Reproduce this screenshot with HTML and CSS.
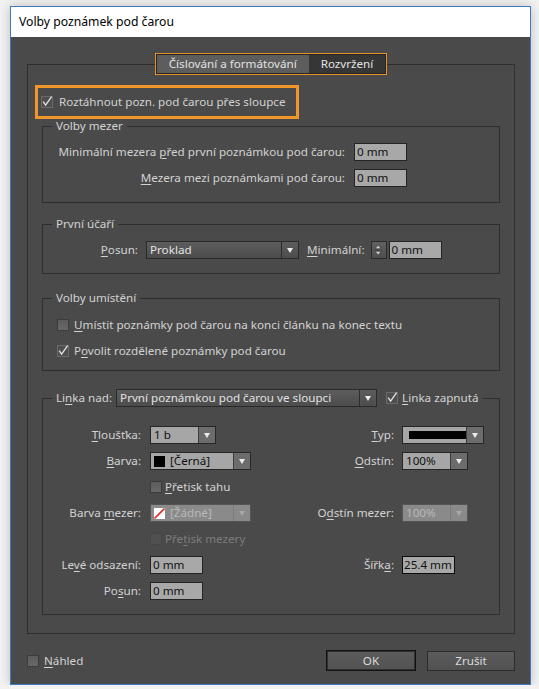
FILE: index.html
```html
<!DOCTYPE html>
<html lang="cs">
<head>
<meta charset="utf-8">
<title>Volby poznámek pod čarou</title>
<link rel="stylesheet" href="styles.css">
</head>
<body>
<div class="window">
  <div class="titlebar">Volby poznámek pod čarou</div>
  <div class="content">
    <fieldset class="main">
      <legend class="tabs-legend">
        <div class="tabs"><span class="tab active">Číslování a formátování</span><span class="tab">Rozvržení</span></div>
      </legend>

      <div class="highlight">
        <span class="cb on"><svg viewBox="0 0 12 12" width="12" height="12"><path d="M2.2 5.6 L4.6 9.2 L10.6 0.6" /></svg></span>
        <span>Roztáhnout pozn. pod čarou přes sloupce</span>
      </div>

      <fieldset class="group g1">
        <legend>Volby mezer</legend>
        <div class="grid-mezer">
          <span class="lbl">Minimální mezera <u>p</u>řed první poznámkou pod čarou:</span>
          <span class="field w53">0 mm</span>
          <span class="lbl"><u>M</u>ezera mezi poznámkami pod čarou:</span>
          <span class="field w53">0 mm</span>
        </div>
      </fieldset>

      <fieldset class="group g2">
        <legend>První účaří</legend>
        <div class="row-ucari">
          <span class="lbl posun-lbl"><u>P</u>osun:</span>
          <div class="combo dark w153"><span class="val">Proklad</span><span class="arr"></span></div>
          <span class="lbl min-lbl"><u>M</u>inimální:</span>
          <span class="spinner"><svg viewBox="0 0 16 18" width="14" height="16"><path d="M4.5 7 L7 4 L9.5 7 Z M4.5 11 L7 14 L9.5 11 Z" fill="#d0d0d0"/><line x1="3" y1="9" x2="11" y2="9" stroke="#3a3a3a" stroke-width="1"/></svg></span>
          <span class="field w53">0 mm</span>
        </div>
      </fieldset>

      <fieldset class="group g3">
        <legend>Volby umístění</legend>
        <div class="checkrow">
          <span class="cb"></span>
          <span><u>U</u>místit poznámky pod čarou na konci článku na konec textu</span>
        </div>
        <div class="checkrow">
          <span class="cb on"><svg viewBox="0 0 12 12" width="12" height="12"><path d="M2.2 5.6 L4.6 9.2 L10.6 0.6" /></svg></span>
          <span>P<u>o</u>volit rozdělené poznámky pod čarou</span>
        </div>
      </fieldset>

      <fieldset class="group g4">
        <legend class="linka-legend">
          <div class="linka">
            <span class="lbl">Li<u>n</u>ka nad:</span>
            <div class="combo dark w261"><span class="val">První poznámkou pod čarou ve sloupci</span><span class="arr"></span></div>
            <span class="cb on"><svg viewBox="0 0 12 12" width="12" height="12"><path d="M2.2 5.6 L4.6 9.2 L10.6 0.6" /></svg></span>
            <span class="linka-on"><u>L</u>inka zapnutá</span>
          </div>
        </legend>
        <div class="grid-linka">
          <span class="lbl l1"><u>T</u>loušťka:</span>
          <div class="combo w66"><span class="val">1 b</span><span class="arr"></span></div>
          <span class="lbl l3"><u>T</u>yp:</span>
          <div class="combo w82"><span class="val"><span class="stroke"></span></span><span class="arr"></span></div>

          <span class="lbl l1"><u>B</u>arva:</span>
          <div class="combo w101"><span class="val"><span class="swatch black"></span>[Černá]</span><span class="arr"></span></div>
          <span class="lbl l3"><u>O</u>dstín:</span>
          <div class="combo w66"><span class="val">100%</span><span class="arr"></span></div>

          <span></span>
          <div class="checkcell"><span class="cb"></span><span><u>P</u>řetisk tahu</span></div>
          <span></span>
          <span></span>

          <span class="lbl l1">Barva <u>m</u>ezer:</span>
          <div class="combo disabled w101"><span class="val"><span class="swatch"><svg viewBox="0 0 11 11" width="11" height="11"><rect x="0" y="0" width="11" height="11" fill="#fff"/><line x1="0.5" y1="10.5" x2="10.5" y2="0.5" stroke="#e0302a" stroke-width="1.6"/></svg></span>[Žádné]</span><span class="arr"></span></div>
          <span class="lbl l3">O<u>d</u>stín mezer:</span>
          <div class="combo disabled w66"><span class="val">100%</span><span class="arr"></span></div>

          <span></span>
          <div class="checkcell off"><span class="cb"></span><span>Pře<u>t</u>isk mezery</span></div>
          <span></span>
          <span></span>

          <span class="lbl l1">Le<u>v</u>é odsazení:</span>
          <span class="field w53">0 mm</span>
          <span class="lbl l3">Šířk<u>a</u>:</span>
          <span class="field w53 focus">25.4 mm</span>

          <span class="lbl l1">Po<u>s</u>un:</span>
          <span class="field w53">0 mm</span>
          <span></span>
          <span></span>
        </div>
      </fieldset>
    </fieldset>

    <div class="footer">
      <span class="cb"></span>
      <span class="nahled"><u>N</u>áhled</span>
      <span class="btn ok">OK</span>
      <span class="btn cancel">Zrušit</span>
    </div>
  </div>
</div>
</body>
</html>
```

FILE: styles.css
```css
* { box-sizing: border-box; }
html, body { margin: 0; padding: 0; }
body {
  background: #f2f2f2;
  font-family: "Noto Sans", "Open Sans", "DejaVu Sans", sans-serif;
  font-size: 12px;
}
u { text-decoration: underline; text-underline-offset: 2px; text-decoration-thickness: 1px; }

.window {
  margin: 6px 0 0 10px;
  width: 521px;
  height: 679px;
  border: 1px solid #3a7cc3;
  box-shadow: 0 0 10px rgba(0, 0, 0, 0.22);
  display: flex;
  flex-direction: column;
}
.titlebar {
  height: 30px;
  background: #fff;
  color: #000;
  padding-left: 8px;
  line-height: 30px;
  font-size: 12.2px;
}
.content {
  flex: 1;
  background: #4a4a4a;
  color: #d2d2d2;
  padding: 16px 15px 0 16px;
  line-height: 18px;
  font-size: 11.65px;
}

fieldset {
  margin: 0;
  padding: 0;
  border: 1px solid #2e2e2e;
  min-width: 0;
}
legend {
  padding: 0 4px;
  margin-left: 9px;
  line-height: 14px;
}

.main { padding: 10px 7px 18px 7px; border-right-color: #303030; }
.tabs-legend { margin: 0 auto; padding: 0; line-height: 18px; }
.tabs {
  display: flex;
  border: 1px solid #e5922b;
  box-shadow: inset 0 0 0 1px #262626;
  height: 22px;
  padding: 1px;
}
.tab {
  padding: 0 12px;
  line-height: 18px;
  height: 18px;
  color: #e2e2e2;
  background: #363636;
}
.tab.active { background: #5d5d5d; }

.highlight {
  display: flex;
  align-items: center;
  gap: 6px;
  width: fit-content;
  height: 34px;
  border: 3px solid #ef972b;
  padding: 0 10px 0 3px;
}

.cb {
  flex: none;
  width: 12px;
  height: 12px;
  border: 1px solid #3b3b3b;
  background: linear-gradient(#5c5c5c, #686868);
  display: inline-block;
  overflow: visible;
}
.cb svg { display: block; margin: -1px 0 0 -1px; overflow: visible; }
.cb svg path { fill: none; stroke: #e4e4e4; stroke-width: 1.3; }
.cb.on { background: #4e4e4e; border-color: #6a6a6a; }

.group { margin: 0 7px; }
.g1 { padding: 10px 0 15px; }
.g2 { margin-top: 14px; padding: 10px 0 14px; }
.g3 { margin-top: 17px; padding: 11px 0 10px; }
.g4 { margin-top: 18px; padding: 19px 0 14px; }

.grid-mezer {
  display: grid;
  grid-template-columns: 302px 53px;
  column-gap: 9px;
  row-gap: 8px;
  align-items: center;
}
.lbl { text-align: right; white-space: nowrap; }

.field {
  display: block;
  height: 18px;
  background: #a8a8a8;
  border: 1px solid #242424;
  color: #111;
  padding: 0 2px;
  line-height: 16px;
  white-space: nowrap;
  overflow: hidden;
}
.field.focus { border-color: #0c0c0c; padding: 0 1px; }
.w53 { width: 53px; }

.row-ucari { display: flex; align-items: center; height: 18px; }
.posun-lbl { width: 95px; margin-right: 8px; }
.min-lbl { margin-left: 8px; margin-right: 6px; }
.spinner {
  width: 16px;
  height: 18px;
  background: linear-gradient(#606060, #4e4e4e);
  border: 1px solid #2c2c2c;
  margin-right: 2px;
  display: flex;
  align-items: center;
  justify-content: center;
}
.spinner svg { display: block; }

.combo {
  display: flex;
  height: 18px;
  border: 1px solid #262626;
  background: #a6a6a6;
  color: #111;
  overflow: hidden;
}
.combo .val {
  flex: 1;
  min-width: 0;
  display: flex;
  align-items: center;
  padding-left: 3px;
  line-height: 16px;
  white-space: nowrap;
  overflow: hidden;
}
.combo .arr {
  flex: none;
  width: 17px;
  background: #6c6c6c;
  border-left: 1px solid #3c3c3c;
  display: flex;
  align-items: center;
  justify-content: center;
}
.combo .arr::after {
  content: "";
  width: 0;
  height: 0;
  border-left: 3.5px solid transparent;
  border-right: 3.5px solid transparent;
  border-top: 5px solid #ececec;
}
.combo.dark { background: linear-gradient(#5d5d5d, #4c4c4c); color: #e2e2e2; border-color: #2a2a2a; }
.combo.dark .arr { background: transparent; border-left-color: #2e2e2e; }
.combo.disabled { background: #8a8a8a; color: #b9b9b9; border-color: #555; }
.combo.disabled .arr { background: #8a8a8a; border-left-color: #7a7a7a; }
.combo.disabled .arr::after { border-top-color: #a8a8a8; }

.w66 { width: 66px; }
.w82 { width: 82px; }
.w101 { width: 101px; }
.w153 { width: 153px; }
.w261 { width: 261px; }

.stroke { display: block; width: 57px; height: 8px; background: #000; margin-left: 3px; }
.swatch { display: inline-block; width: 11px; height: 11px; margin-right: 5px; flex: none; }
.swatch.black { background: #000; }
.swatch svg { display: block; }

.checkrow {
  display: flex;
  align-items: center;
  gap: 5px;
  height: 18px;
  margin-left: 14px;
}
.checkrow + .checkrow { margin-top: 8px; }

.linka-legend { margin-left: 9px; padding: 0 5px 0 4px; }
.linka { display: flex; align-items: center; height: 18px; line-height: 18px; }
.linka .lbl { margin-right: 4px; }
.linka .cb { margin-left: 9px; margin-right: 4px; }

.grid-linka {
  display: grid;
  grid-template-columns: 107px 150px 102px 97px;
  grid-auto-rows: 18px;
  row-gap: 8px;
  align-items: center;
}
.l1 { padding-right: 9px; }
.l3 { padding-right: 8px; }
.checkcell { display: flex; align-items: center; gap: 3px; }
.checkcell.off { color: #7c7c7c; }
.checkcell.off .cb { background: #505050; border-color: #464646; }

.footer {
  display: flex;
  align-items: center;
  margin-top: 16px;
  height: 21px;
}
.footer .cb { margin-right: 5px; }
.nahled { margin-right: auto; }
.btn {
  display: flex;
  align-items: center;
  justify-content: center;
  background: linear-gradient(#5b5b5b, #525252);
  color: #dcdcdc;
  border: 1px solid #2b2b2b;
}
.btn.ok { width: 90px; height: 21px; border-color: #121212; box-shadow: inset 0 0 0 1px #303030; margin-right: 11px; }
.btn.cancel { width: 88px; height: 20px; }
```
